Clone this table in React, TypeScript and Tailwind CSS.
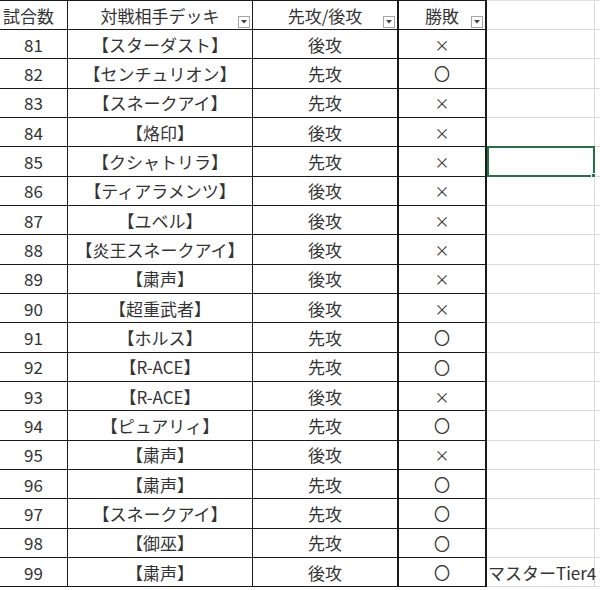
import React from "react";

type Row = [number, string, string, string];

const rows: Row[] = [
  [81, "【スターダスト】", "後攻", "×"],
  [82, "【センチュリオン】", "先攻", "〇"],
  [83, "【スネークアイ】", "先攻", "×"],
  [84, "【烙印】", "後攻", "×"],
  [85, "【クシャトリラ】", "先攻", "×"],
  [86, "【ティアラメンツ】", "後攻", "×"],
  [87, "【ユベル】", "後攻", "×"],
  [88, "【炎王スネークアイ】", "後攻", "×"],
  [89, "【粛声】", "後攻", "×"],
  [90, "【超重武者】", "後攻", "×"],
  [91, "【ホルス】", "先攻", "〇"],
  [92, "【R-ACE】", "先攻", "〇"],
  [93, "【R-ACE】", "後攻", "×"],
  [94, "【ピュアリィ】", "先攻", "〇"],
  [95, "【粛声】", "後攻", "×"],
  [96, "【粛声】", "先攻", "〇"],
  [97, "【スネークアイ】", "先攻", "〇"],
  [98, "【御巫】", "先攻", "〇"],
  [99, "【粛声】", "後攻", "〇"],
];

// little excel filter dropdown box
function FilterButton() {
  return (
    <span className="absolute right-[2px] bottom-[1px] w-[12px] h-[12px] border border-[#a6a6a6] bg-white flex items-center justify-center">
      <svg width="6" height="4" viewBox="0 0 6 4">
        <path d="M0 0h6L3 3.5z" fill="#444" />
      </svg>
    </span>
  );
}

const cell = "box-border border-r border-b border-[#1a1a1a] flex items-center justify-center";

export default function App() {
  return (
    <div
      className="w-[600px] h-[590px] overflow-hidden bg-white text-[17px] text-[#333] leading-none"
      style={{ fontFamily: '"Noto Sans CJK JP", "Noto Sans", sans-serif' }}
    >
      {/* header */}
      <div className="flex h-[30px]">
        <div className={`${cell} w-[68px] border-t justify-start pl-[3px]`}>試合数</div>
        <div className={`${cell} w-[185px] border-t relative`}>
          対戦相手デッキ
          <FilterButton />
        </div>
        <div className={`${cell} w-[146px] border-t relative border-r-2`}>
          先攻/後攻
          <FilterButton />
        </div>
        <div className={`${cell} w-[88px] border-t relative border-r-2`}>
          勝敗
          <FilterButton />
        </div>
        <div className="box-border w-[108px] border-r border-b border-t border-t-[#e1e1e1] border-[#dadada]" />
        <div className="flex-1 box-border border-b border-t border-t-[#e1e1e1] border-[#dadada]" />
      </div>

      {rows.map(([n, deck, turn, result], i) => (
        <div key={n} className="flex h-[29.33px]">
          <div className={`${cell} w-[68px]`}>{n}</div>
          <div className={`${cell} w-[185px]`}>{deck}</div>
          <div className={`${cell} w-[146px] border-r-2`}>{turn}</div>
          <div className={`${cell} w-[88px] border-r-2 ${result === "×" ? "text-[15px]" : "text-[16px]"}`}>
            {result}
          </div>
          {i === 4 ? (
            <div className="relative box-border w-[108px] border-2 border-[#217346] -mt-px">
              <span className="absolute -right-[3px] -bottom-[3px] w-[5px] h-[5px] bg-[#217346] border border-white" />
            </div>
          ) : (
            <div className="box-border w-[108px] border-r border-b border-[#dadada] flex items-center whitespace-nowrap overflow-visible pl-px">
              {n === 99 ? "マスターTier4" : ""}
            </div>
          )}
          <div className="flex-1 box-border border-b border-[#dadada]" />
        </div>
      ))}
    </div>
  );
}
